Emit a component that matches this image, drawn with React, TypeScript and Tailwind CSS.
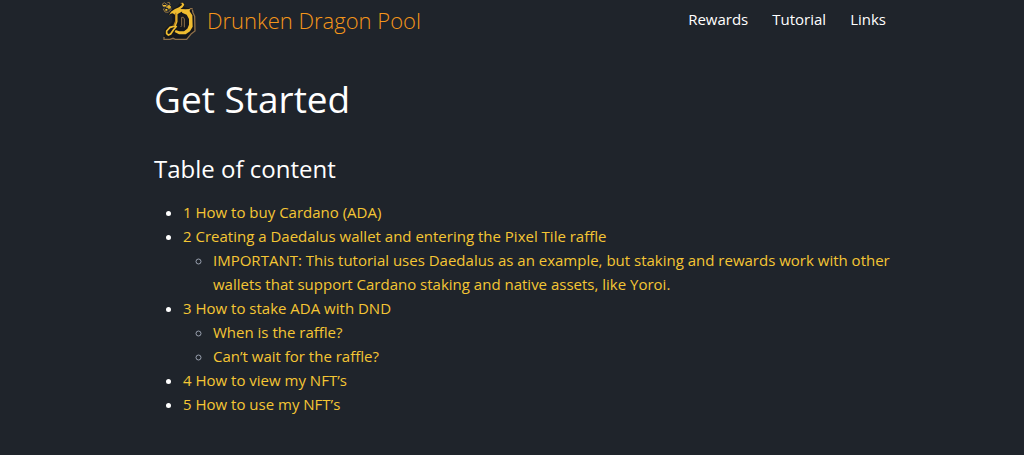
import React from 'react';

interface TocEntry {
  id: string;
  label: string;
  children?: TocEntry[];
}

const navLinks = ['Rewards', 'Tutorial', 'Links'];

const entries: TocEntry[] = [
  { id: 'buy', label: '1 How to buy Cardano (ADA)' },
  {
    id: 'wallet',
    label: '2 Creating a Daedalus wallet and entering the Pixel Tile raffle',
    children: [
      {
        id: 'important',
        label:
          'IMPORTANT: This tutorial uses Daedalus as an example, but staking and rewards work with other wallets that support Cardano staking and native assets, like Yoroi.',
      },
    ],
  },
  {
    id: 'stake',
    label: '3 How to stake ADA with DND',
    children: [
      { id: 'when', label: 'When is the raffle?' },
      { id: 'wait', label: 'Can’t wait for the raffle?' },
    ],
  },
  { id: 'view', label: '4 How to view my NFT’s' },
  { id: 'use', label: '5 How to use my NFT’s' },
];

const DragonLogo: React.FC = () => (
  <svg viewBox="36 0 105 123" className="h-[41px] w-[35px] shrink-0" fill="none" aria-hidden="true">
    {/* outline */}
    <path
      d="M54 44l12-16 16-8 8-12 14 1-2 12 14 4h14l-2 10 7 12 2 17v29l-11 8-16 16H76l-7-3-9 4H42v-9l3-21 13-12 9-10V46z"
      fill="#15171b"
    />
    <path d="M127 29l2 9 5 11 1 44-11 8-14 17H76l-7-3-9 3H42v-7M128 26h-9" stroke="#90714a" strokeWidth="4" />
    {/* top flourish */}
    <path d="M57 46l6-11 12-8 12-5 8-6 1-5-6-2 9-1 4 6-5 8-7 5 15 1 15-1-4 9-22-1-12 7-8 2-7-4-6 1z" fill="#f0bd30" />
    {/* bowl */}
    <path d="M98 29l19 2 10 15 1 34-8 14-13 9H87l-13-7 3-6 11 4h14l10-8 5-12V57l-7-13-14-6z" fill="#f0bd30" />
    {/* stem and loop */}
    <path d="M80 38v27l-5 13-15 4-10 11v8l5 4 7-3 8-12 10-12" stroke="#f0bd30" strokeWidth="5" />
    <path d="M77 38v26l-5 12" stroke="#b9841f" strokeWidth="4" />
    <path d="M92 81l3-4V52h5l3 5v25" stroke="#90714a" strokeWidth="3" />
    {/* sparks */}
    <path d="M39 19l-2-7 6-4 7 5-3 6zM52 8l6-1 2 7-4 4-5-4M44 24l-4 3 5 9 10 1 8-8-1-6" stroke="#8f7141" strokeWidth="3" />
    <path d="M39 15h9v4h-9zM49 19h6v-4h4v4h4v4h-4v5h-4v-5h-6zM46 27h6v5h-6z" fill="#f0bd30" />
  </svg>
);

const TocList: React.FC<{ items: TocEntry[]; nested?: boolean }> = ({ items, nested }) => (
  <ul className={nested ? 'list-[circle] pl-[30px] marker:text-gray-400' : 'list-disc pl-[29px]'}>
    {items.map((item) => (
      <li key={item.id}>
        <a href={`#${item.id}`} className="text-[#f5c634] hover:underline">
          {item.label}
        </a>
        {item.children && <TocList items={item.children} nested />}
      </li>
    ))}
  </ul>
);

export default function App() {
  return (
    <div className="min-h-screen bg-[#1f242b] pl-12 pr-6 font-['Open_Sans',sans-serif] text-[15px] leading-6 text-white">
      <div className="mx-auto max-w-[740px]">
        <header className="flex items-start justify-between pl-2 pr-2">
          <a href="#home" className="flex items-start gap-[10px]">
            <DragonLogo />
            <span className="text-[22px] font-light leading-10 text-[#f5961a]">Drunken Dragon Pool</span>
          </a>
          <nav className="flex gap-6 pt-[7px]">
            {navLinks.map((link) => (
              <a key={link} href={`#${link.toLowerCase()}`} className="hover:underline">
                {link}
              </a>
            ))}
          </nav>
        </header>
        <main className="pt-8">
          <h1 className="text-[37px] leading-[52px]">Get Started</h1>
          <h2 className="pt-[26px] text-2xl leading-9">Table of content</h2>
          <div className="pt-[13px]">
            <TocList items={entries} />
          </div>
        </main>
      </div>
    </div>
  );
}
